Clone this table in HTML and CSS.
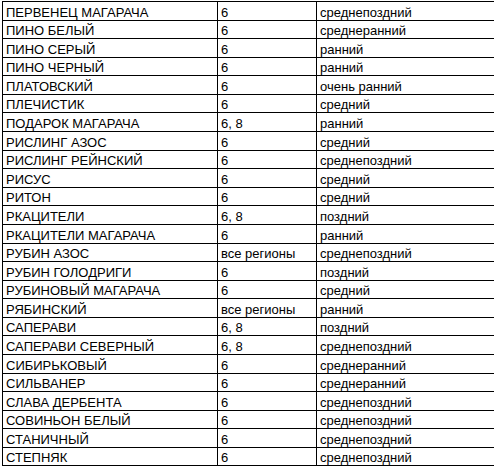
FILE: index.html
```html
<!DOCTYPE html>
<html>
<head>
<meta charset="utf-8">
<link rel="stylesheet" href="styles.css">
</head>
<body>
<table class="grid">
<colgroup><col class="c1"><col class="c2"><col class="c3"></colgroup>
<tbody>
<tr><td>ПЕРВЕНЕЦ МАГАРАЧА</td><td>6</td><td>среднепоздний</td></tr>
<tr><td>ПИНО БЕЛЫЙ</td><td>6</td><td>среднеранний</td></tr>
<tr><td>ПИНО СЕРЫЙ</td><td>6</td><td>ранний</td></tr>
<tr><td>ПИНО ЧЕРНЫЙ</td><td>6</td><td>ранний</td></tr>
<tr><td>ПЛАТОВСКИЙ</td><td>6</td><td>очень ранний</td></tr>
<tr><td>ПЛЕЧИСТИК</td><td>6</td><td>средний</td></tr>
<tr><td>ПОДАРОК МАГАРАЧА</td><td>6, 8</td><td>ранний</td></tr>
<tr><td>РИСЛИНГ АЗОС</td><td>6</td><td>средний</td></tr>
<tr><td>РИСЛИНГ РЕЙНСКИЙ</td><td>6</td><td>среднепоздний</td></tr>
<tr><td>РИСУС</td><td>6</td><td>средний</td></tr>
<tr><td>РИТОН</td><td>6</td><td>средний</td></tr>
<tr><td>РКАЦИТЕЛИ</td><td>6, 8</td><td>поздний</td></tr>
<tr><td>РКАЦИТЕЛИ МАГАРАЧА</td><td>6</td><td>ранний</td></tr>
<tr><td>РУБИН АЗОС</td><td>все регионы</td><td>среднепоздний</td></tr>
<tr><td>РУБИН ГОЛОДРИГИ</td><td>6</td><td>поздний</td></tr>
<tr><td>РУБИНОВЫЙ МАГАРАЧА</td><td>6</td><td>средний</td></tr>
<tr><td>РЯБИНСКИЙ</td><td>все регионы</td><td>ранний</td></tr>
<tr><td>САПЕРАВИ</td><td>6, 8</td><td>поздний</td></tr>
<tr><td>САПЕРАВИ СЕВЕРНЫЙ</td><td>6, 8</td><td>среднепоздний</td></tr>
<tr><td>СИБИРЬКОВЫЙ</td><td>6</td><td>среднеранний</td></tr>
<tr><td>СИЛЬВАНЕР</td><td>6</td><td>среднеранний</td></tr>
<tr><td>СЛАВА ДЕРБЕНТА</td><td>6</td><td>среднепоздний</td></tr>
<tr><td>СОВИНЬОН БЕЛЫЙ</td><td>6</td><td>среднепоздний</td></tr>
<tr><td>СТАНИЧНЫЙ</td><td>6</td><td>среднепоздний</td></tr>
<tr><td>СТЕПНЯК</td><td>6</td><td>среднепоздний</td></tr>
</tbody>
</table>
</body>
</html>
```
FILE: styles.css
```css
html, body {
  margin: 0;
  background: #ffffff;
}
body {
  padding: 1px 0 0 2px;
  font-family: "Liberation Sans", Arial, sans-serif;
  font-size: 13px;
  color: #000000;
}
.grid {
  border-collapse: collapse;
  table-layout: fixed;
  width: 492px;
}
.c1 { width: 215px; }
.c2 { width: 99px; }
.c3 { width: 178px; }
.grid td {
  border: 1px solid #000000;
  height: 18.58px;
  padding: 0 3px;
  line-height: 15px;
  vertical-align: bottom;
  white-space: nowrap;
  box-sizing: border-box;
}
```
